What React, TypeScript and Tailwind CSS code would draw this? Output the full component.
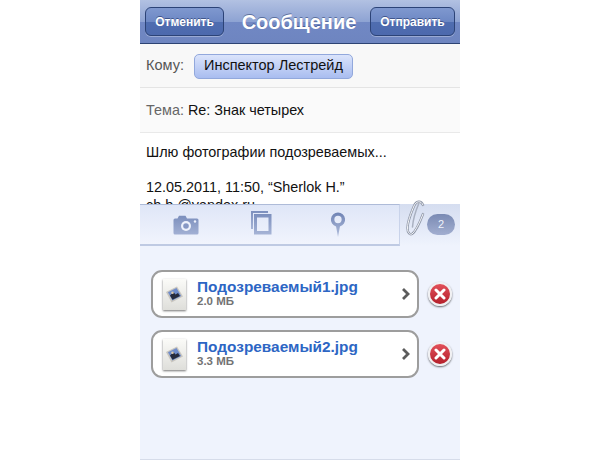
const font = "font-['Liberation_Sans',Arial,sans-serif]";

function NavButton({ label, className }: { label: string; className: string }) {
  return (
    <button
      className={`h-[29px] rounded-[6px] border border-[#2c4377] bg-[linear-gradient(#7f98cf_0%,#6d88c4_50%,#4f6db0_51%,#4c69ad_100%)] text-[12px] font-bold text-white shadow-[0_1px_0_rgba(255,255,255,0.3)] [text-shadow:0_-1px_0_rgba(30,50,100,0.6)] ${className}`}
    >
      {label}
    </button>
  );
}

function CameraIcon() {
  return (
    <svg width="26" height="20" viewBox="0 0 26 20">
      <defs>
        <linearGradient id="cam" x1="0" y1="0" x2="0" y2="1">
          <stop offset="0" stopColor="#7c8fbd" />
          <stop offset="1" stopColor="#a2b0d4" />
        </linearGradient>
      </defs>
      <path
        d="M2 3.500h2.500L6 .8h6.500L14 3.500h10a1.500 1.500 0 0 1 1.500 1.500v13a1.500 1.500 0 0 1-1.500 1.500H2A1.500 1.500 0 0 1 .5 18V5A1.500 1.500 0 0 1 2 3.500z"
        fill="url(#cam)"
      />
      <circle cx="13" cy="11" r="5" fill="#eef2fc" />
      <circle cx="13" cy="11" r="2.800" fill="#8798c4" />
      <circle cx="22" cy="6.500" r="1.200" fill="#eef2fc" />
    </svg>
  );
}

function CopiesIcon() {
  return (
    <svg width="21" height="24" viewBox="0 0 21 24">
      <defs>
        <linearGradient id="cop" x1="0" y1="0" x2="0" y2="1">
          <stop offset="0" stopColor="#7c8fbd" />
          <stop offset="1" stopColor="#a6b4d6" />
        </linearGradient>
      </defs>
      <path d="M0 0h17v2H2v16H0z" fill="url(#cop)" />
      <path fillRule="evenodd" d="M3 3h17.500v20.500H3zM6 6.500v13.500h11.500V6.500z" fill="url(#cop)" />
    </svg>
  );
}

function PinIcon() {
  return (
    <svg width="16" height="25" viewBox="0 0 16 26">
      <defs>
        <linearGradient id="pin" x1="0" y1="0" x2="0" y2="1">
          <stop offset="0" stopColor="#6f83b4" />
          <stop offset="1" stopColor="#b3bfdd" />
        </linearGradient>
      </defs>
      <path
        fillRule="evenodd"
        d="M8 .5a7.500 7.500 0 0 1 2 14.700L8 26l-2-10.800A7.500 7.500 0 0 1 8 .5zM8 4a3.800 3.800 0 1 0 0 7.600A3.800 3.800 0 0 0 8 4z"
        fill="url(#pin)"
      />
    </svg>
  );
}

const clipPath = "M18 5C16 0 11 1 9 6 6 13 2.500 22 2.500 28 2.500 33 5 35 7 34 10 32 15 22 18 14";
const clipInner = "M14 3C11 10 8 20 7.500 27";

function PaperClip() {
  return (
    <svg width="20" height="36" viewBox="0 0 20 36" className="absolute left-[5px] top-[-4px]">
      <path d={clipInner} fill="none" stroke="#a9b0c0" strokeWidth="1.500" strokeLinecap="round" />
      <path d={clipPath} fill="none" stroke="#8f97a8" strokeWidth="2.400" strokeLinecap="round" />
      <path d={clipPath} fill="none" stroke="#f4f5f8" strokeWidth="1" strokeLinecap="round" />
    </svg>
  );
}

function FileThumb() {
  return (
    <div className="flex h-[31px] w-[23px] shrink-0 items-center justify-center bg-[linear-gradient(#fbfbf8,#dededa)] shadow-[0_1px_2px_rgba(0,0,0,0.55)]">
      <svg width="19" height="17" viewBox="0 0 19 17">
        <path d="M1 6 12 .5l6 10L6.500 16.500z" fill="#c9c6bf" />
        <path d="M3 6.200 11.500 2l4.700 8-8.800 4.500z" fill="#6f8ccb" />
        <path d="M5 9.500 8.500 6 10.500 8.500l2.500-1.500 2 3-7.500 3.800z" fill="#262a3c" />
        <circle cx="7.500" cy="6.800" r="1.300" fill="#d8c8b0" />
      </svg>
    </div>
  );
}

function DeleteButton() {
  return (
    <div className="flex h-[24px] w-[24px] items-center justify-center rounded-full border-2 border-[#f0f0f2] bg-[linear-gradient(#e2505a,#b4202c)] shadow-[0_1px_2px_rgba(0,0,0,0.6)]">
      <svg width="12" height="12" viewBox="0 0 12 12">
        <path d="M2 2l8 8M10 2l-8 8" stroke="#fff" strokeWidth="3" strokeLinecap="round" />
      </svg>
    </div>
  );
}

function FileRow({ name, size }: { name: string; size: string }) {
  return (
    <div className="flex items-center pl-[11px]">
      <div className="flex h-[48px] w-[268px] items-center rounded-[11px] border-[2px] border-[#9d9d9d] bg-white pl-[10px] pr-[6px]">
        <FileThumb />
        <div className="ml-[11px] flex-1 pb-[3px]">
          <div className="text-[15.400px] leading-[17px] font-bold text-[#2d66c4]">{name}</div>
          <div className="text-[11.500px] leading-[12px] font-bold text-[#737373]">{size}</div>
        </div>
        <svg width="10" height="14" viewBox="0 0 10 14">
          <path d="M2 2l5 5-5 5" fill="none" stroke="#5c5c5c" strokeWidth="2.800" />
        </svg>
      </div>
      <div className="ml-[9px]">
        <DeleteButton />
      </div>
    </div>
  );
}

export default function App() {
  return (
    <div className={`flex h-[460px] w-full justify-center bg-white ${font}`}>
      <div className="flex h-[460px] w-[320px] flex-col overflow-hidden">
        {/* Nav bar */}
        <div className="flex h-[44px] items-center justify-between border-b border-[#2d4373] bg-[linear-gradient(#b2c1e2_0%,#8ea3d3_50%,#7188c4_51%,#6e85c0_100%)] px-[5px]">
          <NavButton label="Отменить" className="w-[79px]" />
          <span className="ml-[4px] text-[20px] font-bold text-white [text-shadow:0_-1px_0_rgba(40,60,110,0.55)]">
            Сообщение
          </span>
          <NavButton label="Отправить" className="w-[85px]" />
        </div>

        {/* Recipient */}
        <div className="flex h-[44px] items-center border-b border-[#e4e4e4] bg-[#f8f8f8] pl-[6px] pt-[1px]">
          <span className="text-[14.500px] text-[#555]">Кому:</span>
          <span className="ml-[10px] flex h-[25px] w-[159px] items-center justify-center rounded-[5px] border border-[#92a8dc] bg-[linear-gradient(#dbe4fb,#a9bdf0)] text-[14.500px] text-[#111]">
            Инспектор Лестрейд
          </span>
        </div>

        {/* Subject */}
        <div className="flex h-[45px] items-center border-b border-[#e9e9e9] bg-[#fafafa] pl-[6px] pt-[1px] text-[14.400px]">
          <span className="text-[#666]">Тема:</span>
          <span className="ml-[4px] text-[#111]">Re: Знак четырех</span>
        </div>

        {/* Body */}
        <div className="h-[71px] overflow-hidden bg-white pl-[6px] pt-[10px] text-[14.400px] leading-[18px] text-[#111]">
          <div>Шлю фотографии подозреваемых...</div>
          <div className="mt-[17px]">12.05.2011, 11:50, “Sherlok H.”</div>
          <div>ch.b @yandex.ru</div>
        </div>

        {/* Attachments */}
        <div className="flex-1 border-b border-[#d6dcea] bg-[#eff3fd]">
          <div className="flex h-[42px]">
            <div className="flex h-[42px] w-[260px] items-center border-t border-r border-b-[2px] border-t-[#aebbd8] border-r-[#c9d3ea] border-b-[#bfcae3] bg-[linear-gradient(#dfe6f7,#f1f4fd)] pl-[33px]">
              <CameraIcon />
              <div className="mb-[3px] ml-[52px]">
                <CopiesIcon />
              </div>
              <div className="ml-[58px]">
                <PinIcon />
              </div>
            </div>
            <div className="relative flex flex-1 items-start bg-[linear-gradient(#d5ddf0,#eff3fd)] pt-[10px] pl-[27px]">
              <PaperClip />
              <span className="flex h-[21px] w-[28px] items-center justify-center rounded-full bg-[linear-gradient(#7a8ab3,#a2aed0)] text-[11px] text-[#f0f3fb]">
                2
              </span>
            </div>
          </div>
          <div className="mt-[24px] flex flex-col gap-[12px]">
            <FileRow name="Подозреваемый1.jpg" size="2.0 МБ" />
            <FileRow name="Подозреваемый2.jpg" size="3.3 МБ" />
          </div>
        </div>
      </div>
    </div>
  );
}
